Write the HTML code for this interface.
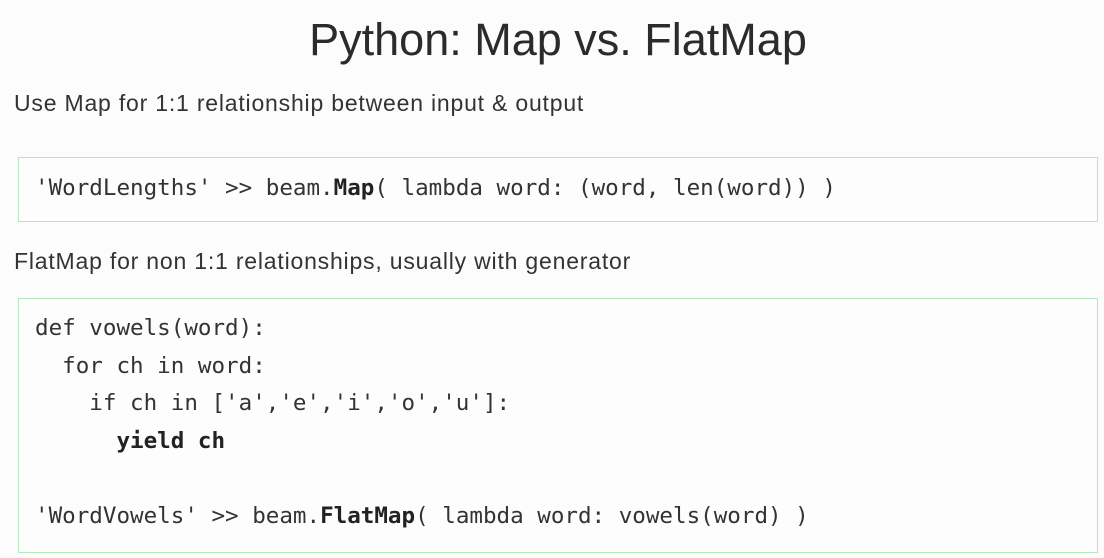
<!DOCTYPE html>
<html><head><style>
html,body{margin:0;padding:0;}
body{width:1104px;height:558px;background:#fcfcfc;position:relative;overflow:hidden;font-family:"Liberation Sans",sans-serif;color:#333;}
.t{position:absolute;left:0;width:1116px;text-align:center;top:14px;font-size:45px;color:#2b2b2b;}
.p{position:absolute;left:14px;font-size:23px;letter-spacing:0.8px;color:#333;}
.box{position:absolute;left:18px;width:1078px;border:1.5px solid #b8e6bc;background:#fdfdfd;}
.code{position:absolute;left:35px;font-family:"DejaVu Sans Mono",monospace;font-size:22.55px;color:#333;white-space:pre;line-height:37.5px;}
b{font-weight:bold;color:#222;}
</style></head><body>
<div class="t">Python: Map vs. FlatMap</div>
<div class="p" style="top:90px">Use Map for 1:1 relationship between input &amp; output</div>
<div class="box" style="top:157px;height:63px"></div>
<div class="code" style="top:170px">'WordLengths' &gt;&gt; beam.<b>Map</b>( lambda word: (word, len(word)) )</div>
<div class="p" style="top:248px">FlatMap for non 1:1 relationships, usually with generator</div>
<div class="box" style="top:298px;height:253px"></div>
<div class="code" style="top:310px">def vowels(word):
  for ch in word:
    if ch in ['a','e','i','o','u']:
      <b>yield ch</b>

'WordVowels' &gt;&gt; beam.<b>FlatMap</b>( lambda word: vowels(word) )</div>
</body></html>
